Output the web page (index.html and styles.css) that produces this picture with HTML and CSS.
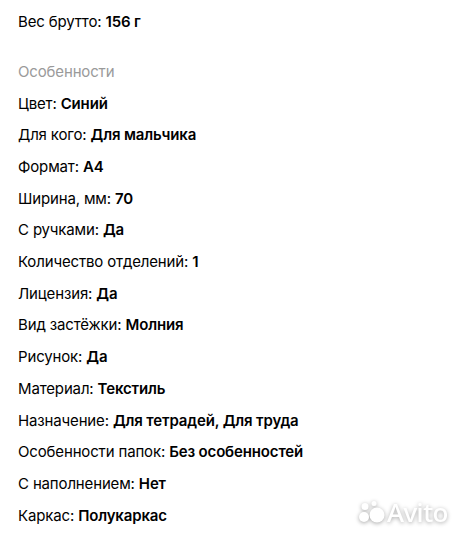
FILE: index.html
```html
<!DOCTYPE html>
<html lang="ru">
<head>
<meta charset="utf-8">
<link rel="stylesheet" href="styles.css">
</head>
<body>
<div class="page">
  <div class="row">Вес брутто: <b>156 г</b></div>
  <div class="section">
    <div class="row head">Особенности</div>
    <div class="row">Цвет: <b>Синий</b></div>
    <div class="row">Для кого: <b>Для мальчика</b></div>
    <div class="row">Формат: <b>А4</b></div>
    <div class="row">Ширина, мм: <b>70</b></div>
    <div class="row">С ручками: <b>Да</b></div>
    <div class="row">Количество отделений: <b>1</b></div>
    <div class="row">Лицензия: <b>Да</b></div>
    <div class="row">Вид застёжки: <b>Молния</b></div>
    <div class="row">Рисунок: <b>Да</b></div>
    <div class="row">Материал: <b>Текстиль</b></div>
    <div class="row">Назначение: <b>Для тетрадей, Для труда</b></div>
    <div class="row">Особенности папок: <b>Без особенностей</b></div>
    <div class="row">С наполнением: <b>Нет</b></div>
    <div class="row">Каркас: <b>Полукаркас</b></div>
  </div>
  <div class="watermark">
    <svg class="wm-logo" width="30" height="24" viewBox="0 0 30 24">
      <circle cx="21" cy="15" r="7.5"/>
      <circle cx="8" cy="17" r="5"/>
      <circle cx="9" cy="6.5" r="3.5"/>
      <circle cx="18" cy="3.5" r="2.5"/>
    </svg>
    <span class="wm-text">Avito</span>
  </div>
</div>
</body>
</html>
```
FILE: styles.css
```css
html, body {
  margin: 0;
  padding: 0;
  background: #fff;
}
.page {
  position: relative;
  width: 459px;
  height: 540px;
  overflow: hidden;
  padding: 6px 0 0 18px;
  box-sizing: border-box;
  font-family: Inter, "Noto Sans", sans-serif;
  font-size: 15px;
  letter-spacing: -0.15px;
  color: #000;
}
.row {
  height: 31.7px;
  line-height: 31.7px;
  white-space: nowrap;
}
.row b {
  font-weight: 600;
}
.section {
  margin-top: 18.3px;
}
.head {
  color: #9a9a9a;
}
.watermark {
  position: absolute;
  right: 11px;
  bottom: 15px;
  display: flex;
  align-items: center;
  gap: 1px;
  filter: drop-shadow(0 1px 2px rgba(0,0,0,0.35));
}
.wm-logo circle {
  fill: #fff;
}
.wm-text {
  color: #fff;
  font-family: "Noto Sans", sans-serif;
  font-size: 26px;
  font-weight: 500;
  letter-spacing: -0.5px;
  line-height: 1;
}
```
